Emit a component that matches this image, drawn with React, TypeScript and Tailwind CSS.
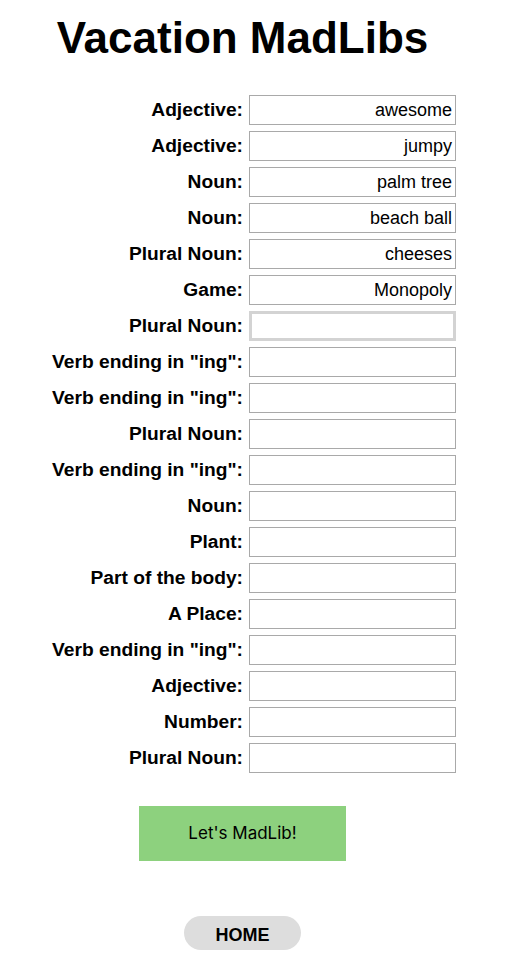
import React from "react";

const rows: [string, string][] = [
  ["Adjective:", "awesome"],
  ["Adjective:", "jumpy"],
  ["Noun:", "palm tree"],
  ["Noun:", "beach ball"],
  ["Plural Noun:", "cheeses"],
  ["Game:", "Monopoly"],
  ["Plural Noun:", ""],
  ['Verb ending in "ing":', ""],
  ['Verb ending in "ing":', ""],
  ["Plural Noun:", ""],
  ['Verb ending in "ing":', ""],
  ["Noun:", ""],
  ["Plant:", ""],
  ["Part of the body:", ""],
  ["A Place:", ""],
  ['Verb ending in "ing":', ""],
  ["Adjective:", ""],
  ["Number:", ""],
  ["Plural Noun:", ""],
];

export default function App() {
  return (
    <div
      className="w-[507px] min-h-[957px] bg-white text-black"
      style={{ fontFamily: '"Liberation Sans", Arial, sans-serif' }}
    >
      <div className="w-[485px] flex flex-col">
        <h1 className="pt-[12px] text-center text-[44px] leading-[52px] font-bold">
          Vacation MadLibs
        </h1>
        <div className="mt-[31px] ml-[46px] grid grid-cols-[203px_207px] gap-y-[6px]">
          {rows.map(([label, value], i) => (
            <React.Fragment key={i}>
              <div className="pr-[6px] text-right text-[19.2px] font-bold leading-[30px] whitespace-nowrap">
                {label}
              </div>
              <div
                className={
                  i === 6
                    ? "h-[30px] border-[3px] border-[#d3d3d3] bg-white"
                    : "h-[30px] border border-[#a9a9a9] bg-white flex items-center justify-end pr-[3px]"
                }
              >
                {value && (
                  <span className="text-[18px] leading-none whitespace-nowrap">{value}</span>
                )}
              </div>
            </React.Fragment>
          ))}
        </div>
        <div className="mt-[33px] flex justify-center">
          <div
            className="w-[207px] h-[55px] bg-[#8dd17e] flex items-center justify-center text-[17px]"
            style={{ fontFamily: 'Inter, "Noto Sans", sans-serif' }}
          >
            Let's MadLib!
          </div>
        </div>
        <div className="mt-[55px] flex justify-center">
          <div className="w-[117px] h-[34px] pt-[4px] rounded-full bg-[#dddddd] flex items-center justify-center text-[18px] font-bold">
            HOME
          </div>
        </div>
      </div>
    </div>
  );
}
